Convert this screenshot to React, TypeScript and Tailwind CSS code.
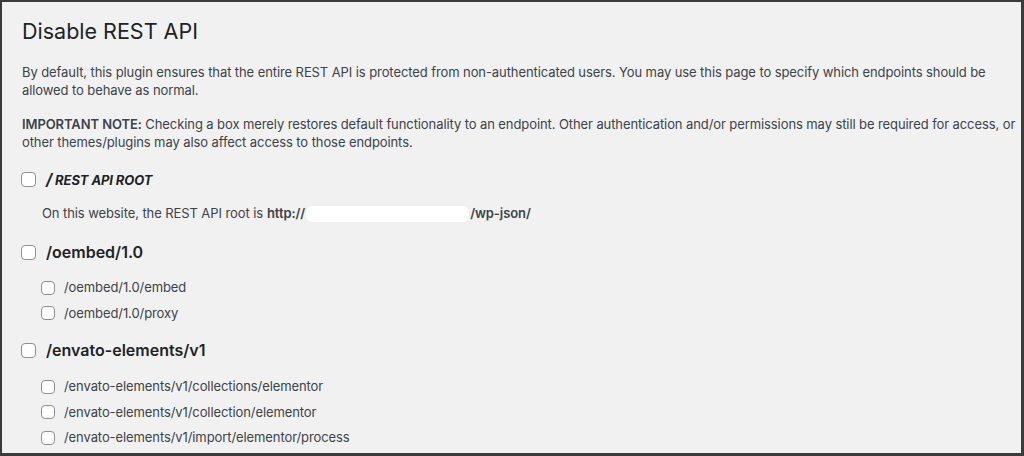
import React from "react";

const font = { fontFamily: "Inter, 'Noto Sans', sans-serif" };

function Box({ big }: { big?: boolean }) {
  return (
    <span
      className={
        "inline-block shrink-0 bg-white border border-[#8c8f94] rounded-[4px] " +
        (big ? "w-[15px] h-[15px]" : "w-[14px] h-[14px]")
      }
    />
  );
}

function Sub({ label }: { label: string }) {
  return (
    <div className="flex items-center gap-[9px] h-[25.5px] pl-[20px]">
      <Box />
      <span className="text-[13px] tracking-[-0.09px] text-[#3c434a]">{label}</span>
    </div>
  );
}

export default function App() {
  return (
    <div
      className="w-[1024px] h-[456px] overflow-hidden bg-[#f1f1f1] border-2 border-[#3b3b3b] border-r-[3px] border-b-[3px] box-border text-[#3c434a]"
      style={font}
    >
      <div className="pl-[19px] pr-[2px]">
        <h1 className="text-[21.5px] leading-[29px] font-normal text-[#1d2327] pt-[15px] pl-[1px]">
          Disable REST API
        </h1>
        <p className="text-[13px] leading-[18px] tracking-[-0.09px] mt-[17px] pl-[1px] whitespace-nowrap">
          By default, this plugin ensures that the entire REST API is protected from non-authenticated users. You may use this page to specify which endpoints should be
          <br />
          allowed to behave as normal.
        </p>
        <p className="text-[13px] leading-[18px] tracking-[-0.09px] mt-[16px] pl-[1px] whitespace-nowrap">
          <strong className="font-semibold">IMPORTANT NOTE:</strong> Checking a box merely restores default functionality to an endpoint. Other authentication and/or permissions may still be required for access, or
          <br />
          other themes/plugins may also affect access to those endpoints.
        </p>
        <div className="flex items-center gap-[10px] mt-[16px] h-[24px]">
          <Box big />
          <span className="text-[13px] font-bold italic text-[#1d2327] tracking-[-0.1px]">
            <span className="text-[16px]">/</span> REST API ROOT
          </span>
        </div>
        <div className="pl-[21px] mt-[13px] text-[13px] tracking-[-0.09px] h-[20px] flex items-center whitespace-nowrap">
          On this website, the REST API root is{" "}
          <strong className="font-semibold ml-[4px]">http://</strong>
          <span className="inline-block w-[163px] h-[16px] ml-[1px] bg-white rounded-[6px]" />
          <strong className="font-semibold ml-[1px]">/wp-json/</strong>
        </div>
        <div className="flex items-center gap-[10px] mt-[14px] h-[28px]">
          <Box big />
          <span className="text-[16px] font-semibold text-[#1d2327]">/oembed/1.0</span>
        </div>
        <div className="mt-[9px]">
          <Sub label="/oembed/1.0/embed" />
          <Sub label="/oembed/1.0/proxy" />
        </div>
        <div className="flex items-center gap-[10px] mt-[10px] h-[28px]">
          <Box big />
          <span className="text-[16px] font-semibold text-[#1d2327]">/envato-elements/v1</span>
        </div>
        <div className="mt-[10px]">
          <Sub label="/envato-elements/v1/collections/elementor" />
          <Sub label="/envato-elements/v1/collection/elementor" />
          <Sub label="/envato-elements/v1/import/elementor/process" />
          <Sub label="/envato-elements/v1/import/elementor" />
        </div>
      </div>
    </div>
  );
}
